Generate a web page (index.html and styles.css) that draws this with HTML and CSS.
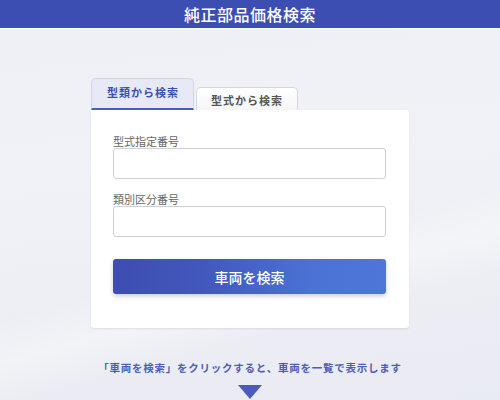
FILE: index.html
```html
<!DOCTYPE html>
<html lang="ja">
<head>
<meta charset="utf-8">
<title>純正部品価格検索</title>
<link rel="stylesheet" href="styles.css">
</head>
<body>
<header class="header">純正部品価格検索</header>
<main class="main">
  <div class="panel">
    <div class="tabs">
      <div class="tab tab-active">型類から検索</div>
      <div class="tab">型式から検索</div>
    </div>
    <form class="card">
      <label class="label">型式指定番号</label>
      <input class="input" type="text">
      <label class="label label-second">類別区分番号</label>
      <input class="input" type="text">
      <button class="button" type="button">車両を検索</button>
    </form>
  </div>
  <p class="note">「車両を検索」をクリックすると、車両を一覧で表示します</p>
  <div class="arrow"></div>
</main>
</body>
</html>
```
FILE: styles.css
```css
html, body {
  margin: 0;
  padding: 0;
  height: 100%;
}
body {
  font-family: "Noto Sans CJK JP", "Noto Sans", sans-serif;
  background:
    linear-gradient(165deg, rgba(255,255,255,0) 60%, rgba(255,255,255,0.35) 68%, rgba(255,255,255,0) 76%),
    linear-gradient(175deg, #edeff5 0%, #f1f2f7 40%, #e9ebf2 100%);
  overflow: hidden;
}
.header {
  height: 28px;
  line-height: 28px;
  background: #3d4eb2;
  color: #fff;
  text-align: center;
  font-size: 16px;
  font-weight: 500;
  letter-spacing: 0.5px;
  border-bottom: 1px solid #fdfdff;
}
.main {
  display: flex;
  flex-direction: column;
  align-items: center;
  padding-top: 49px;
}
.panel {
  width: 318px;
}
.tabs {
  display: flex;
  align-items: flex-end;
  gap: 2px;
  height: 32px;
}
.tab {
  box-sizing: border-box;
  width: 102px;
  height: 23px;
  border: 1px solid #d6d7dc;
  border-bottom: none;
  border-radius: 5px 5px 0 0;
  background: linear-gradient(#ffffff, #f6f6f8);
  color: #555;
  font-size: 11px;
  font-weight: 700;
  letter-spacing: 1px;
  text-align: center;
  line-height: 25px;
}
.tab-active {
  width: 103px;
  height: 32px;
  background: #e7eaf6;
  color: #3d4eb2;
  border-color: #d3d6e2;
  border-bottom: 2px solid #4a5bc2;
  line-height: 27px;
  padding-left: 1px;
}
.card {
  display: flex;
  flex-direction: column;
  background: #fff;
  border-radius: 0 3px 3px 3px;
  box-shadow: 0 1px 2px rgba(60, 70, 110, 0.12);
  padding: 24px 23px 34px 22px;
}
.label {
  font-size: 11px;
  line-height: 14px;
  color: #666;
}
.label-second {
  margin-top: 13px;
}
.input {
  box-sizing: border-box;
  height: 31px;
  margin: 0;
  border: 1px solid #cfd0d4;
  border-radius: 3px;
  background: #fff;
}
.button {
  margin-top: 22px;
  height: 35px;
  border: none;
  border-radius: 3px;
  background: linear-gradient(90deg, #3d4db1 0%, #4359bd 35%, #4b73d6 75%, #4e76d9 100%);
  color: #fff;
  font-family: inherit;
  font-size: 14px;
  font-weight: 500;
  box-shadow: 0 2px 4px rgba(40, 50, 100, 0.25);
  padding: 0;
}
.note {
  margin: 32px 0 0;
  font-size: 10.5px;
  line-height: 16px;
  font-weight: 700;
  letter-spacing: 0.75px;
  color: #4e5db6;
}
.arrow {
  margin-top: 9px;
  width: 0;
  height: 0;
  border-left: 12.5px solid transparent;
  border-right: 12.5px solid transparent;
  border-top: 14px solid #4b5bbb;
}
```
